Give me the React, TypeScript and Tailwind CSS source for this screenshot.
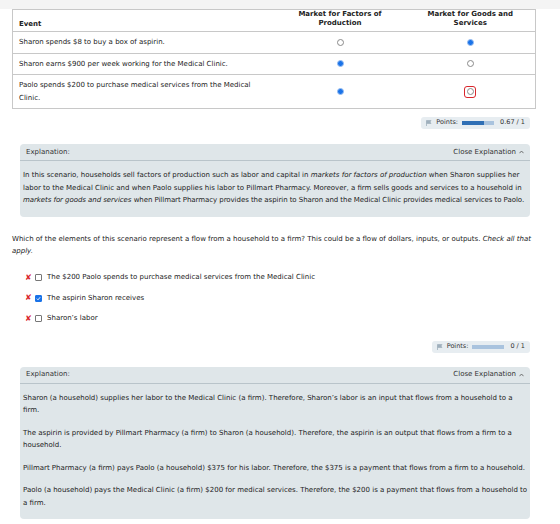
import { ReactNode } from "react";

type Choice = "factors" | "goods";

const rows: { event: string; picked: Choice; flagged?: boolean }[] = [
  { event: "Sharon spends $8 to buy a box of aspirin.", picked: "goods" },
  { event: "Sharon earns $900 per week working for the Medical Clinic.", picked: "factors" },
  { event: "Paolo spends $200 to purchase medical services from the Medical Clinic.", picked: "factors", flagged: true },
];

function Radio({ on, flagged }: { on: boolean; flagged?: boolean }) {
  const dot = on ? (
    <span className="w-[7px] h-[7px] rounded-full bg-[#1a73e8] border-[1.5px] border-[#9cc0f2]" />
  ) : (
    <span className="w-[7px] h-[7px] rounded-full border border-[#8a8a8a] bg-white" />
  );
  if (!flagged) return dot;
  return (
    <span className="w-[12px] h-[12px] rounded-[3px] border border-[#d9262c] flex items-center justify-center">
      {dot}
    </span>
  );
}

function PointsBadge({ ratio, label }: { ratio: number; label: string }) {
  return (
    <div className="flex justify-end pr-[30px]">
      <div className="flex items-center gap-[4px] h-[12px] px-[5px] rounded-[3px] bg-[#e7edf1] text-[6.5px] text-[#333]">
        <svg width="6" height="6" viewBox="0 0 6 6">
          <path d="M0.5 0.5V6M0.5 0.6H5L3.8 2L5 3.4H0.5" fill="#9fb0bd" stroke="#9fb0bd" strokeWidth="0.8" />
        </svg>
        <span>Points:</span>
        <span className="w-[32px] h-[4px] bg-[#a9c3de] flex">
          <span className="h-full bg-[#2f6fb5]" style={{ width: `${ratio * 100}%` }} />
        </span>
        <span className="ml-[2px]">{label}</span>
      </div>
    </div>
  );
}

function Explanation({ children }: { children: ReactNode }) {
  return (
    <div className="ml-[20px] w-[510px] rounded-[4px] bg-[#dfe6e9]">
      <div className="h-[17px] px-[6px] flex items-center justify-between border-b border-[#b9c4ca] text-[7px] text-[#333]">
        <span>Explanation:</span>
        <span className="flex items-center gap-[3px]">
          Close Explanation
          <svg width="5" height="4" viewBox="0 0 5 4">
            <path d="M0.5 3.2L2.5 1L4.5 3.2" fill="none" stroke="#555" strokeWidth="0.8" />
          </svg>
        </span>
      </div>
      <div className="pl-[3px] pt-[8px] pb-[10px] text-[7px] leading-[12.5px] text-[#222]">{children}</div>
    </div>
  );
}

function Mark() {
  return <span className="text-[#d9262c] font-bold text-[8px] leading-none w-[8px]">✘</span>;
}

export default function App() {
  return (
    <div className="min-h-screen bg-white text-[#222]" style={{ fontFamily: '"DejaVu Sans", Verdana, sans-serif' }}>
      <div className="h-[9px] bg-[#f4f4f4]" />

      <table className="ml-[12px] w-[524px] border-collapse border border-[#c8c8c8] text-[7px]">
        <thead>
          <tr className="h-[21px] border-b border-[#c8c8c8]">
            <th className="align-bottom text-left font-bold px-[6px] pb-[3px] leading-[8px] w-[262px]">Event</th>
            <th className="align-bottom text-center font-bold pb-[3px] leading-[9px] w-[131px]">
              Market for Factors of
              <br />
              Production
            </th>
            <th className="align-bottom text-center font-bold pb-[3px] leading-[9px]">
              Market for Goods and
              <br />
              Services
            </th>
          </tr>
        </thead>
        <tbody>
          {rows.map((r) => (
            <tr key={r.event} className="border-b border-[#c8c8c8] last:border-b-0">
              <td className="px-[6px] py-[4px] leading-[12.5px] h-[20px]">
                <div className="w-[240px]">{r.event}</div>
              </td>
              <td>
                <div className="flex justify-center">
                  <Radio on={r.picked === "factors"} />
                </div>
              </td>
              <td>
                <div className="flex justify-center">
                  <Radio on={r.picked === "goods"} flagged={r.flagged} />
                </div>
              </td>
            </tr>
          ))}
        </tbody>
      </table>

      <div className="mt-[8px]">
        <PointsBadge ratio={0.67} label="0.67 / 1" />
      </div>

      <div className="mt-[15px]">
        <Explanation>
          <div className="whitespace-nowrap">
            In this scenario, households sell factors of production such as labor and capital in{" "}
            <i>markets for factors of production</i> when Sharon supplies her
          </div>
          <div className="whitespace-nowrap">
            labor to the Medical Clinic and when Paolo supplies his labor to Pillmart Pharmacy. Moreover, a firm sells
            goods and services to a household in
          </div>
          <div className="whitespace-nowrap tracking-[-0.06px]">
            <i>markets for goods and services</i> when Pillmart Pharmacy provides the aspirin to Sharon and the Medical
            Clinic provides medical services to Paolo.
          </div>
        </Explanation>
      </div>

      <p className="mt-[16px] ml-[12px] w-[520px] text-[7px] leading-[12px]">
        Which of the elements of this scenario represent a flow from a household to a firm? This could be a flow of
        dollars, inputs, or outputs. <i>Check all that apply.</i>
      </p>

      <div className="mt-[15px] ml-[25px] flex flex-col gap-[8.5px] text-[7px]">
        {[
          { text: "The $200 Paolo spends to purchase medical services from the Medical Clinic", on: false },
          { text: "The aspirin Sharon receives", on: true },
          { text: "Sharon\u2019s labor", on: false },
        ].map((o) => (
          <div key={o.text} className="flex items-center gap-[2px] h-[12px]">
            <Mark />
            <span
              className={
                "w-[7px] h-[7px] rounded-[1px] border flex items-center justify-center " +
                (o.on ? "bg-[#1a73e8] border-[#1a73e8]" : "bg-white border-[#777]")
              }
            >
              {o.on && (
                <svg width="5" height="5" viewBox="0 0 5 5">
                  <path d="M0.8 2.6L2 3.8L4.2 1.2" fill="none" stroke="white" strokeWidth="0.9" />
                </svg>
              )}
            </span>
            <span className="ml-[3px]">{o.text}</span>
          </div>
        ))}
      </div>

      <div className="mt-[16px]">
        <PointsBadge ratio={0} label="0 / 1" />
      </div>

      <div className="mt-[14px]">
        <Explanation>
          <p className="mb-[10px]">
            Sharon (a household) supplies her labor to the Medical Clinic (a firm). Therefore, Sharon’s labor is an
            input that flows from a household to a firm.
          </p>
          <p className="mb-[10px]">
            The aspirin is provided by Pillmart Pharmacy (a firm) to Sharon (a household). Therefore, the aspirin is an
            output that flows from a firm to a household.
          </p>
          <p className="mb-[10px]">
            Pillmart Pharmacy (a firm) pays Paolo (a household) $375 for his labor. Therefore, the $375 is a payment
            that flows from a firm to a household.
          </p>
          <p>
            Paolo (a household) pays the Medical Clinic (a firm) $200 for medical services. Therefore, the $200 is a
            payment that flows from a household to a firm.
          </p>
        </Explanation>
      </div>
    </div>
  );
}
